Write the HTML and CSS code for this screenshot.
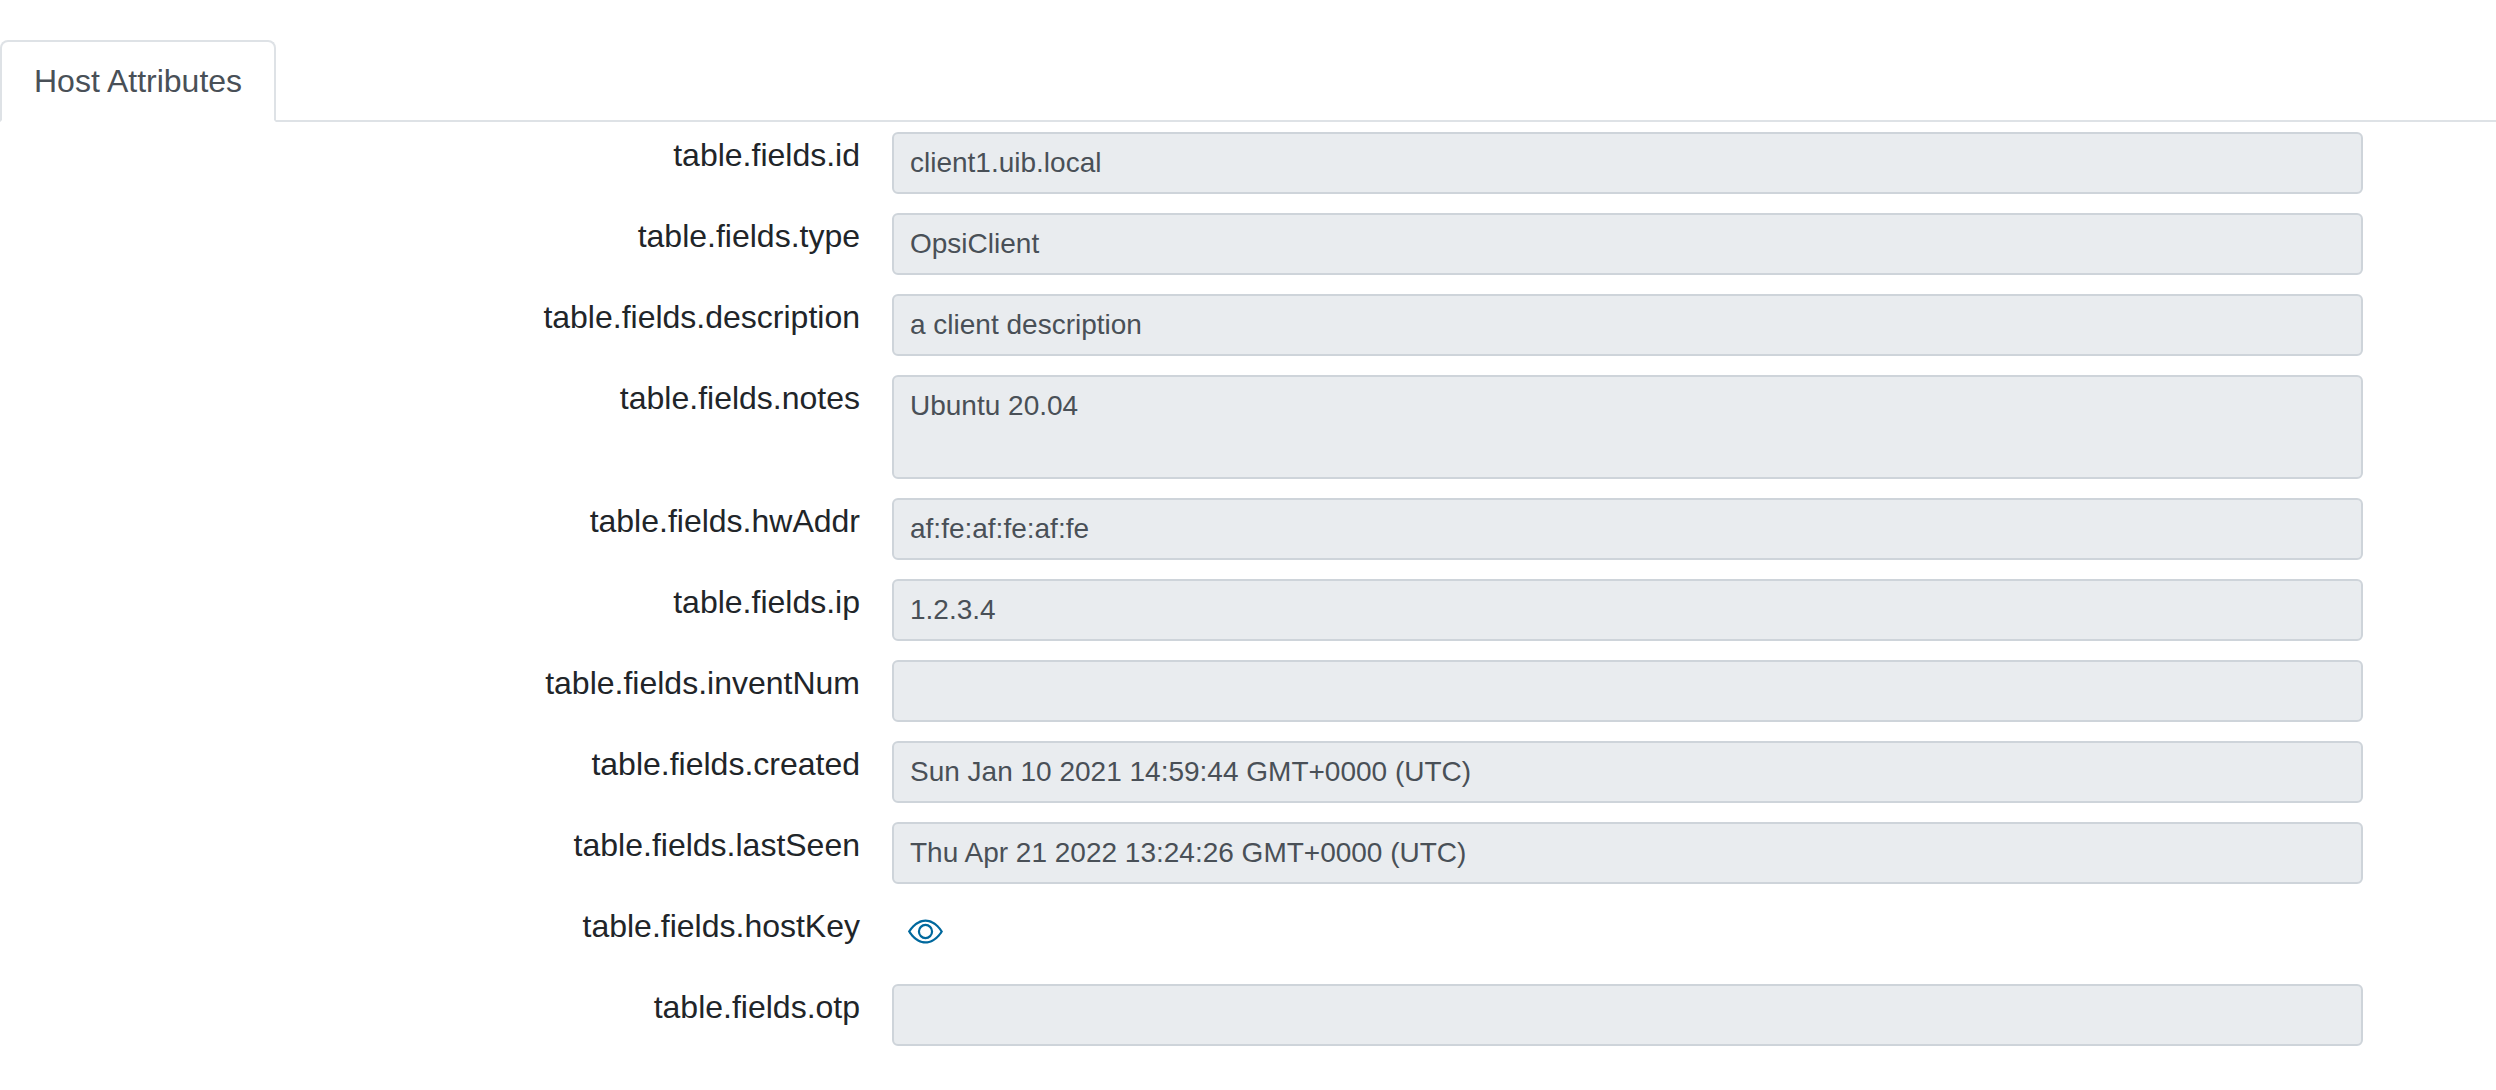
FILE: index.html
```html
<!DOCTYPE html>
<html lang="en">
<head>
<meta charset="utf-8">
<meta name="viewport" content="width=device-width, initial-scale=1">
<title>Host Attributes</title>
<link rel="stylesheet" href="styles.css">
</head>
<body>
<nav class="tabs">
  <a class="tab" href="#attributes" aria-current="page">Host Attributes</a>
</nav>
<form class="fields" id="attributes">
  <div class="row">
    <label for="id">table.fields.id</label>
    <input class="control" id="id" type="text" value="client1.uib.local" readonly>
  </div>
  <div class="row">
    <label for="type">table.fields.type</label>
    <input class="control" id="type" type="text" value="OpsiClient" readonly>
  </div>
  <div class="row">
    <label for="description">table.fields.description</label>
    <input class="control" id="description" type="text" value="a client description" readonly>
  </div>
  <div class="row">
    <label for="notes">table.fields.notes</label>
    <textarea class="control" id="notes" rows="2" readonly>Ubuntu 20.04</textarea>
  </div>
  <div class="row">
    <label for="hwAddr">table.fields.hwAddr</label>
    <input class="control" id="hwAddr" type="text" value="af:fe:af:fe:af:fe" readonly>
  </div>
  <div class="row">
    <label for="ip">table.fields.ip</label>
    <input class="control" id="ip" type="text" value="1.2.3.4" readonly>
  </div>
  <div class="row">
    <label for="inventNum">table.fields.inventNum</label>
    <input class="control" id="inventNum" type="text" readonly>
  </div>
  <div class="row">
    <label for="created">table.fields.created</label>
    <input class="control" id="created" type="text" value="Sun Jan 10 2021 14:59:44 GMT+0000 (UTC)" readonly>
  </div>
  <div class="row">
    <label for="lastSeen">table.fields.lastSeen</label>
    <input class="control" id="lastSeen" type="text" value="Thu Apr 21 2022 13:24:26 GMT+0000 (UTC)" readonly>
  </div>
  <div class="row">
    <label for="hostKey">table.fields.hostKey</label>
    <button class="reveal" id="hostKey" type="button" aria-label="Show host key">
      <svg class="icon" viewBox="0 0 16 16" fill="currentColor" aria-hidden="true">
        <path d="M16 8s-3-5.500-8-5.500S0 8 0 8s3 5.500 8 5.500S16 8 16 8zM1.173 8a13.133 13.133 0 0 1 1.660-2.043C4.120 4.668 5.880 3.500 8 3.500c2.120 0 3.879 1.168 5.168 2.457A13.133 13.133 0 0 1 14.828 8c-.058.087-.122.183-.195.288-.335.480-.830 1.120-1.465 1.755C11.879 11.332 10.119 12.500 8 12.500c-2.120 0-3.879-1.168-5.168-2.457A13.134 13.134 0 0 1 1.172 8z"/>
        <path d="M8 5.500a2.500 2.500 0 1 0 0 5 2.500 2.500 0 0 0 0-5zM4.500 8a3.500 3.500 0 1 1 7 0 3.500 3.500 0 0 1-7 0z"/>
      </svg>
    </button>
  </div>
  <div class="row">
    <label for="otp">table.fields.otp</label>
    <input class="control" id="otp" type="text" readonly>
  </div>
</form>
</body>
</html>
```
FILE: styles.css
```css
* {
  box-sizing: border-box;
}

body {
  margin: 0;
  padding-top: 40px;
  background: #fff;
  color: #212529;
  font-family: "Liberation Sans", Arial, sans-serif;
  font-size: 32px;
  line-height: 46px;
}

.tabs {
  display: flex;
  border-bottom: 2px solid #dee2e6;
}

.tab {
  margin-bottom: -2px;
  padding: 16px 32px;
  border: 2px solid #dee2e6;
  border-bottom-color: #fff;
  border-radius: 8px 8px 0 0;
  background: #fff;
  color: #495057;
  text-decoration: none;
}

.fields {
  display: grid;
  gap: 19px;
  padding: 10px 0;
}

.row {
  display: grid;
  grid-template-columns: 860fr 1471fr;
  column-gap: 32px;
  align-items: start;
  min-height: 62px;
  margin-right: 133px;
}

label {
  text-align: right;
}

.control {
  display: block;
  width: 100%;
  min-width: 0;
  height: 62px;
  margin: 0;
  padding: 8px 16px;
  border: 2px solid #ced4da;
  border-radius: 6px;
  outline: 0;
  background: #e9ecef;
  color: #495057;
  font-family: inherit;
  font-size: 28px;
  line-height: 42px;
  text-rendering: optimizeSpeed;
}

textarea.control {
  height: 104px;
  resize: none;
  overflow: auto;
}

.reveal {
  justify-self: start;
  display: flex;
  align-items: center;
  height: 56px;
  padding: 0 16px;
  border: 0;
  background: none;
  color: #00689d;
}

.icon {
  width: 35px;
  height: 35px;
}
```
